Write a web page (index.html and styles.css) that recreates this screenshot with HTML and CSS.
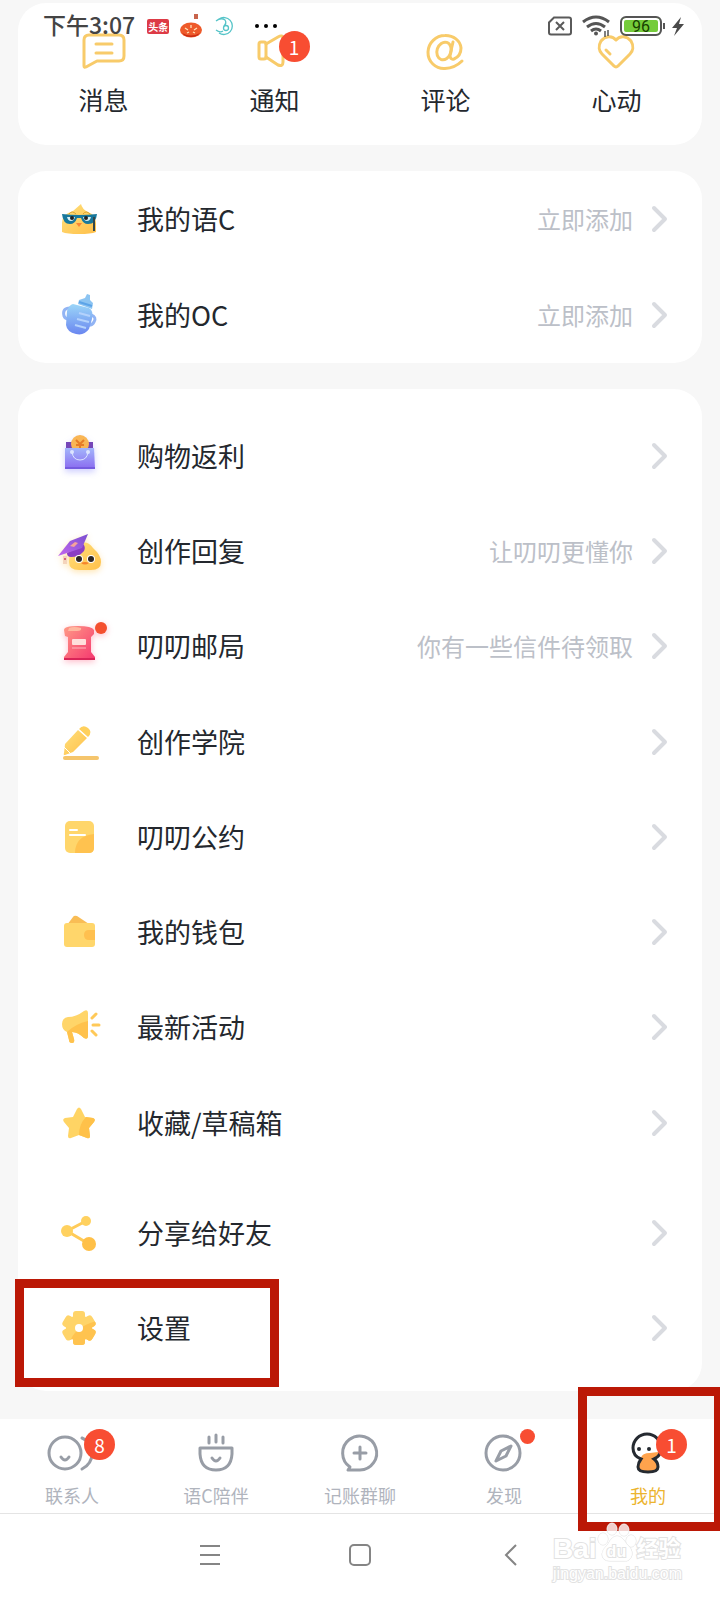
FILE: index.html
```
<!DOCTYPE html>
<html lang="zh-CN">
<head>
    <meta charset="UTF-8">
    <meta name="viewport" content="width=device-width, initial-scale=1.0">
    <title>我的</title>
    <link rel="stylesheet" href="styles.css">
</head>
<body>
    <!-- degradados compartidos -->
    <svg class="defs" width="0" height="0" aria-hidden="true">
        <defs>
            <linearGradient id="gold" x1="0" y1="0" x2="1" y2="1"><stop offset="0" stop-color="#ffe07c"/><stop offset="1" stop-color="#ffc04a"/></linearGradient>
            <linearGradient id="blue" x1="0" y1="0" x2="0" y2="1"><stop offset="0" stop-color="#9bd6f8"/><stop offset="1" stop-color="#6a86f0"/></linearGradient>
            <linearGradient id="violet" x1="0" y1="0" x2="0" y2="1"><stop offset="0" stop-color="#a3b6fb"/><stop offset="1" stop-color="#8a6af0"/></linearGradient>
            <linearGradient id="purple" x1="1" y1="0" x2="0" y2="1"><stop offset="0" stop-color="#7a4fd0"/><stop offset="1" stop-color="#c267ee"/></linearGradient>
            <linearGradient id="pink" x1="0" y1="0" x2="1" y2="1"><stop offset="0" stop-color="#ff9a86"/><stop offset="1" stop-color="#f5366f"/></linearGradient>
            <clipPath id="gear">
                <circle cx="24" cy="24" r="13"/>
                <rect x="18" y="7" width="12" height="34" rx="3"/>
                <rect x="18" y="7" width="12" height="34" rx="3" transform="rotate(60 24 24)"/>
                <rect x="18" y="7" width="12" height="34" rx="3" transform="rotate(120 24 24)"/>
            </clipPath>
        </defs>
    </svg>

    <header class="status-bar">
        <span class="clock">下午3:07</span>
        <span class="app-tag">头条</span>
        <svg class="pumpkin" width="24" height="26" viewBox="0 0 24 26">
            <path d="M15 1h4v5h-4z" fill="#c8644c"/>
            <ellipse cx="12" cy="17" rx="11" ry="7.500" fill="#ee5a2a"/>
            <path d="M3 20q9 5 18 0q-3 4-9 4t-9-4z" fill="#c92a12"/>
            <path d="M6 15l3 2M12 12v3M18 15l-3 2M8 20l2-1M16 20l-2-1" stroke="#ffe2b8" stroke-width="1.3"/>
        </svg>
        <svg class="swirl" width="20" height="20" viewBox="0 0 20 20" fill="none" stroke="#55c4c8" stroke-width="1.3">
            <path d="M5 3a8.500 8.500 0 1 1 0 14M2 5q5-4 9-1q2 3-1 6M2 14q4 3 7 1"/>
            <circle cx="12" cy="12" r="2.500"/>
        </svg>
        <svg class="dots" width="24" height="6" viewBox="0 0 24 6"><circle cx="3" cy="3" r="2"/><circle cx="12" cy="3" r="2"/><circle cx="21" cy="3" r="2"/></svg>
        <div class="status-right">
            <svg width="24" height="20" viewBox="0 0 24 20" fill="none" stroke="#5a5a5a" stroke-width="2"><path d="M6 1.500H21q2 0 2 2V16.500q0 2-2 2H3q-2 0-2-2V6.500zM8 6l8 8M16 6l-8 8"/></svg>
            <svg width="28" height="22" viewBox="0 0 28 22" fill="none" stroke="#555" stroke-width="3">
                <path d="M1 7q13-10 26 0M5 12q9-7 18 0M9 16q5-4 10 0"/><circle cx="14" cy="18.500" r="2" fill="#555" stroke="none"/>
                <path d="M23 16v6M26 15v6" stroke-width="1.500"/>
            </svg>
            <span class="battery">96</span>
            <svg width="12" height="20" viewBox="0 0 12 20"><path d="M9 1L0 12h5l-3 8L12 8H7z" fill="#4a4a4a"/></svg>
        </div>
    </header>

    <main>
        <nav class="card shortcuts">
            <a href="#mensajes">
                <span class="icon">
                    <svg viewBox="0 0 48 40" class="line-gold"><path d="M9 4H39q5 0 5 5V25q0 5-5 5H17L6 36q-2 1-2-1V9q0-5 5-5M16 13H32M16 22H32"/></svg>
                </span>
                消息
            </a>
            <a href="#avisos">
                <span class="icon">
                    <svg viewBox="0 0 48 40" class="line-gold"><rect x="8" y="11" width="7" height="17" rx="2"/><path d="M15 13L27 6q5-3 5 2V31q0 5-5 3L15 26"/></svg>
                    <span class="badge">1</span>
                </span>
                通知
            </a>
            <a href="#comentarios">
                <span class="icon">
                    <svg viewBox="0 0 48 40" class="line-gold"><ellipse cx="22" cy="20" rx="7" ry="9" transform="rotate(18 22 20)"/><path d="M31 11L28 24q0 5 4 4q7-3 7-11A15.500 13.500 0 0 0 23 4.500A17 17 0 0 0 6 21A16 16 0 0 0 23 37.500Q33 37 40 30"/></svg>
                </span>
                评论
            </a>
            <a href="#favoritos">
                <span class="icon">
                    <svg viewBox="0 0 48 40" class="line-gold"><path d="M23 9C19 4 12 5 8 10C5 15 6 20 9 23L21 35q2 2 4 0L37 23C40 20 41 15 38 10C34 5 27 4 23 9zM13 19L17 23"/></svg>
                </span>
                心动
            </a>
        </nav>

        <section class="card">
            <a class="row" href="#yuc">
                <svg class="row-icon" viewBox="0 0 48 48">
                    <path d="M7 37V28Q7 19 18 16L26 9Q27 14 33 17Q41 20 41 28V37Q36 39 24 39T7 37z" fill="url(#gold)"/>
                    <path d="M14 19q3-4 7 0M28 19q3-4 7 0" stroke="#d8a534" fill="none"/>
                    <path d="M7 19q17 2 35 0q-1 10-9 10q-5 0-7-6h-4q-2 6-7 6q-7 0-8-10z" fill="#17789c"/>
                    <path d="M39 22v14" stroke="#33474c" stroke-width="2"/>
                    <path d="M12 22h8q-1 4-4 4t-4-4M28 22h8q-1 4-4 4t-4-4" fill="#d8f0f4"/>
                    <circle cx="17" cy="23" r="2" fill="#222"/><circle cx="31" cy="23" r="2" fill="#222"/>
                    <path d="M21 28h6l-3 4z" fill="#f88736"/>
                </svg>
                <span class="label">我的语C</span>
                <span class="hint">立即添加</span>
                <svg class="chevron" viewBox="0 0 16 28"><path d="M3 3L14 14L3 25"/></svg>
            </a>
            <a class="row" href="#oc">
                <svg class="row-icon" viewBox="0 0 48 48">
                    <path d="M15 17Q7 17 9 25Q10 28 14 28M36 24Q42 26 39 31Q37 35 32 34" fill="none" stroke="#92b4f4" stroke-width="3"/>
                    <path d="M18 13L34 17Q39 20 37 28L34 38Q29 45 21 43Q12 41 11 34L12 20Q14 14 18 13z" fill="url(#blue)"/>
                    <path d="M23 13L24 9L30 7L32 3L35 4L35 9L38 12L37 18z" fill="#8cc4f2"/>
                    <path d="M24 11L37 15" stroke="#5ca4e8" stroke-width="2"/>
                    <path d="M24 22L35 25M22 28L34 31M20 34L31 37" stroke="#b4d2fc" stroke-width="2"/>
                </svg>
                <span class="label">我的OC</span>
                <span class="hint">立即添加</span>
                <svg class="chevron" viewBox="0 0 16 28"><path d="M3 3L14 14L3 25"/></svg>
            </a>
        </section>

        <section class="card card-main">
            <a class="row" href="#compras">
                <svg class="row-icon glow-violet" viewBox="0 0 48 48">
                    <path d="M11 10h27v8H11z" fill="#7546b8"/>
                    <circle cx="25" cy="12" r="9" fill="#f9b655"/>
                    <path d="M21 8l4 4l4-4M25 12v7M21 13h8" stroke="#e67c28" stroke-width="2" fill="none"/>
                    <path d="M10 16H39L40 37H10z" fill="url(#violet)"/>
                    <path d="M10 35H40V37H10z" fill="#755be0"/>
                    <path d="M17 20q1 8 8 8t8-8" stroke="#dce5ff" stroke-width="1" fill="none"/><circle cx="17" cy="20" r="2" fill="#dce5ff"/><circle cx="33" cy="20" r="2" fill="#dce5ff"/>
                </svg>
                <span class="label">购物返利</span>
                <svg class="chevron" viewBox="0 0 16 28"><path d="M3 3L14 14L3 25"/></svg>
            </a>
            <a class="row" href="#respuestas">
                <svg class="row-icon glow-gold" viewBox="0 0 48 48">
                    <path d="M14 35Q14 20 26 16Q33 14 38 21Q46 28 46 35Q46 43 36 43H24Q14 43 14 35z" fill="url(#gold)"/>
                    <path d="M12 26L28 17Q31 20 29 24Q24 30 16 30Q12 30 12 26z" fill="#8b3ec4"/>
                    <path d="M3 29L15 14L33 7L27 21z" fill="url(#purple)"/>
                    <path d="M15 19l5-4l3 1l-4 4z" fill="#f6a39a"/>
                    <path d="M10 29v8" stroke="#f4d4bc" stroke-width="4"/><circle cx="10" cy="32" r="1" fill="#c8426a"/>
                    <circle cx="24" cy="32" r="4" fill="#fff"/><circle cx="36" cy="32" r="4" fill="#fff"/>
                    <circle cx="24" cy="32" r="3" fill="#2d2624"/><circle cx="36" cy="32" r="3" fill="#2d2624"/>
                    <path d="M26 36q4-2 8 0q-4 3-8 0z" fill="#f5842c"/>
                </svg>
                <span class="label">创作回复</span>
                <span class="hint">让叨叨更懂你</span>
                <svg class="chevron" viewBox="0 0 16 28"><path d="M3 3L14 14L3 25"/></svg>
            </a>
            <a class="row" href="#correo">
                <svg class="row-icon glow-pink" viewBox="0 0 48 48">
                    <path d="M9 8Q9 4 23 4T39 8V12L36 15V30L40 35V38H9V35L13 30V15L10 14z" fill="url(#pink)"/>
                    <path d="M9 36H40V38H9z" fill="#d92458"/>
                    <path d="M14 6q5-2 12 0q1 3-4 3h-9z" fill="#ffb8a0"/>
                    <rect x="17" y="17" width="14" height="6" rx="1" fill="#ffe0dc"/><path d="M17 26h14" stroke="#ffb7bc"/>
                    <circle cx="46" cy="6" r="6" fill="#f4502f"/>
                </svg>
                <span class="label">叨叨邮局</span>
                <span class="hint">你有一些信件待领取</span>
                <svg class="chevron" viewBox="0 0 16 28"><path d="M3 3L14 14L3 25"/></svg>
            </a>
            <a class="row" href="#academia">
                <svg class="row-icon" viewBox="0 0 48 48">
                    <rect x="8" y="38" width="36" height="4" rx="2" fill="#f5c56c"/>
                    <path d="M10 26L23 12L32 20L18 34L10 37q-2 0-1-2Z" fill="url(#gold)"/>
                    <path d="M24 11Q28 6 33 10T33 19z" fill="#ffd05c"/>
                    <path d="M23 11L33 20M9 29L16 36" stroke="#fff" stroke-width="1"/>
                </svg>
                <span class="label">创作学院</span>
                <svg class="chevron" viewBox="0 0 16 28"><path d="M3 3L14 14L3 25"/></svg>
            </a>
            <a class="row" href="#convenio">
                <svg class="row-icon" viewBox="0 0 48 48">
                    <rect x="10" y="8" width="29" height="32" rx="5" fill="#ffd66b"/>
                    <path d="M39 21V35q0 5-5 5H20Q20 23 39 21z" fill="#ffc24f"/>
                    <path d="M15 17h7M15 22h15" stroke="#fff" stroke-width="2" stroke-linecap="round"/>
                </svg>
                <span class="label">叨叨公约</span>
                <svg class="chevron" viewBox="0 0 16 28"><path d="M3 3L14 14L3 25"/></svg>
            </a>
            <a class="row" href="#cartera">
                <svg class="row-icon" viewBox="0 0 48 48">
                    <path d="M12 17L18 9q1-2 4-1L34 16z" fill="#f9bd55"/>
                    <rect x="9" y="15" width="31" height="24" rx="3" fill="#ffd66b"/>
                    <path d="M40 22v10h-6q-5 0-5-5t5-5z" fill="#ffc04f"/>
                </svg>
                <span class="label">我的钱包</span>
                <svg class="chevron" viewBox="0 0 16 28"><path d="M3 3L14 14L3 25"/></svg>
            </a>
            <a class="row" href="#actividades">
                <svg class="row-icon" viewBox="0 0 48 48">
                    <path d="M13 14Q21 14 29 8q4-2 4 2V33q0 4-4 2Q23 29 17 29L19 36q1 4-2 4t-3-3L12 29Q7 27 7 21Q7 15 13 14z" fill="#ffd569"/>
                    <path d="M33 18V33q0 4-4 2Q23 29 17 29L19 36q1 4-2 4t-3-3L12 29Q20 21 33 18z" fill="#ffc24d"/>
                    <path d="M37 15L41 11M38 22H44M37 28L41 32" stroke="#ffc958" stroke-width="3" stroke-linecap="round"/>
                </svg>
                <span class="label">最新活动</span>
                <svg class="chevron" viewBox="0 0 16 28"><path d="M3 3L14 14L3 25"/></svg>
            </a>
            <a class="row" href="#guardados">
                <svg class="row-icon" viewBox="0 0 48 48">
                    <path d="M22 10q2-3 4 0l4 8l8 1q3 1 1 4l-5 6l1 8q0 3-3 2l-8-3l-8 3q-3 1-3-2l1-8l-5-6q-2-3 1-4l8-1z" fill="#ffd464"/>
                    <path d="M31 18l7 1q3 1 1 4l-5 6l1 8q0 3-3 2l-8-3q0-11 7-18z" fill="#ffc149"/>
                </svg>
                <span class="label">收藏/草稿箱</span>
                <svg class="chevron" viewBox="0 0 16 28"><path d="M3 3L14 14L3 25"/></svg>
            </a>
            <a class="row row-spaced" href="#compartir">
                <svg class="row-icon" viewBox="0 0 48 48">
                    <path d="M31 12L12 22L34 35" fill="none" stroke="#ffcb59" stroke-width="3"/>
                    <circle cx="31" cy="12" r="5" fill="#ffd15f"/><circle cx="12" cy="22" r="6" fill="#ffd15f"/><circle cx="34" cy="35" r="7" fill="#ffc048"/>
                </svg>
                <span class="label">分享给好友</span>
                <svg class="chevron" viewBox="0 0 16 28"><path d="M3 3L14 14L3 25"/></svg>
            </a>
            <a class="row row-marked" href="#ajustes">
                <svg class="row-icon" viewBox="0 0 48 48">
                    <g clip-path="url(#gear)">
                        <rect width="48" height="48" fill="#ffd469"/>
                        <path d="M48 16Q20 20 14 40V48H48z" fill="#ffc34f"/>
                    </g>
                    <circle cx="24" cy="24" r="4" fill="#fff"/>
                </svg>
                <span class="label">设置</span>
                <svg class="chevron" viewBox="0 0 16 28"><path d="M3 3L14 14L3 25"/></svg>
            </a>
        </section>
    </main>

    <nav class="tab-bar">
        <a href="#contactos">
            <span class="icon">
                <svg viewBox="0 0 48 48" class="line-gray"><circle cx="17" cy="24" r="16"/><path d="M13 28q4 6 8 0"/><path d="M34 9q10 4 10 15t-10 16"/></svg>
                <span class="badge">8</span>
            </span>
            联系人
        </a>
        <a href="#compania">
            <span class="icon">
                <svg viewBox="0 0 48 48" class="line-gray"><path d="M8 19H40V25Q39 41 24 41T8 25zM20 29q4 6 8 0M17 8v6M24 6v7M31 8v6"/></svg>
            </span>
            语C陪伴
        </a>
        <a href="#grupos">
            <span class="icon">
                <svg viewBox="0 0 48 48" class="line-gray"><path d="M12 41H24A17 17 0 1 0 14 38zM24 18V30M18 24H30"/></svg>
            </span>
            记账群聊
        </a>
        <a href="#descubrir">
            <span class="icon">
                <svg viewBox="0 0 48 48" class="line-gray"><circle cx="23" cy="24" r="17"/><path d="M31 17L21 22L16 32L26 27z"/></svg>
                <span class="dot"></span>
            </span>
            发现
        </a>
        <a class="active" href="#perfil">
            <span class="icon">
                <svg viewBox="0 0 48 48">
                    <path d="M16 30Q9 27 9 19A14 14 0 0 1 37 19Q37 27 30 30Q34 33 34 38Q34 43 24 43T14 38Q14 33 16 30z" fill="#fff"/>
                    <path d="M17 29Q18 24 26 24L34 23Q35 27 30 30Q34 33 34 38Q34 43 24 43T14 38Q14 33 17 29z" fill="#ffa34d"/>
                    <path d="M17 30Q9 27 9 19A14 14 0 0 1 37 19Q37 27 30 30Q34 33 34 38Q34 43 24 43T14 38Q14 34 17 30z" fill="none" stroke="#252a31" stroke-width="3"/>
                    <circle cx="15" cy="20" r="2" fill="#252a31"/><circle cx="25" cy="20" r="2" fill="#252a31"/>
                </svg>
                <span class="badge">1</span>
            </span>
            我的
        </a>
    </nav>

    <footer class="system-nav">
        <button type="button" aria-label="菜单"><svg viewBox="0 0 24 24"><path d="M2 3H22M2 12H22M2 21H22"/></svg></button>
        <button type="button" aria-label="主页"><svg viewBox="0 0 24 24"><rect x="2" y="2" width="20" height="20" rx="4"/></svg></button>
        <button type="button" aria-label="返回"><svg viewBox="0 0 24 24"><path d="M18 2L8 12L18 22"/></svg></button>
        <div class="watermark">
            <div class="watermark-logo">
                <span>Bai</span>
                <span class="paw">
                    <svg viewBox="0 0 40 42"><ellipse cx="6" cy="17" rx="5" ry="6"/><ellipse cx="15" cy="7" rx="5" ry="6"/><ellipse cx="27" cy="8" rx="5" ry="6"/><ellipse cx="34" cy="19" rx="5" ry="6"/><path d="M20 14q5 0 9 7q7 6 6 12q-2 7-8 6h-14q-8 0-8-7q0-4 6-10q4-8 9-8z"/></svg>
                    <span class="paw-text">du</span>
                </span>
                <span class="watermark-cn">经验</span>
            </div>
            <div class="watermark-url">jingyan.baidu.com</div>
        </div>
    </footer>
</body>
</html>
```
FILE: styles.css
```
/* ========= VARIABLES ========= */
:root{
    --bg:#f7f7f7;
    --text:#24282e;
    --muted:#bcc0c8;
    --gray:#989da6;
    --gold:#f8cb6a;
    --red:#f84d32;
    --mark:#bb1806;
}

/* ========= RESET ========= */
*,*::after{margin:0;padding:0;box-sizing:border-box;}
body{
    position:relative;
    display:flex;flex-direction:column;
    min-height:100vh;
    background:var(--bg);
    color:var(--text);
    font-family:"Noto Sans CJK SC",sans-serif;
}
a{color:inherit;text-decoration:none;}
svg{display:block;overflow:visible;}
.defs{position:absolute;}

/* ========= BARRA DE ESTADO ========= */
.status-bar{
    position:absolute;top:0;left:0;right:0;z-index:5;
    display:flex;align-items:center;
    height:52px;padding:0 36px 0 43px;
}
.clock{font-size:23px;line-height:48px;height:52px;font-weight:500;color:#444;white-space:nowrap;}
.app-tag{
    margin-left:12px;padding:0 1px;
    background:#dd3b46;color:#fff;border-radius:2px;
    font-size:10px;line-height:15px;font-weight:700;
}
.pumpkin{margin-left:10px;}
.swirl{margin-left:11px;}
.dots{margin-left:20px;}
.status-right{display:flex;align-items:center;gap:10px;margin-left:auto;}
.battery{
    position:relative;
    width:42px;height:20px;
    border:2px solid #555;border-radius:6px;
    background:#75cc3a;box-shadow:inset 0 0 0 2px #fff;
    color:#164000;text-align:center;
    font:400 16px/17px Roboto,sans-serif;
}
.battery::after{
    content:'';position:absolute;right:-5px;top:5px;
    width:2px;height:6px;background:#555;
}

/* ========= TARJETAS ========= */
main{flex:1;display:flex;flex-direction:column;gap:26px;padding:3px 18px 28px;}
.card{background:#fff;border-radius:28px;}
.card-main{flex:1;display:flex;flex-direction:column;padding:19px 0 15px;}

.shortcuts{display:flex;padding:28px 0;}
.shortcuts a{
    flex:1;display:flex;flex-direction:column;align-items:center;gap:10px;
    font-size:25px;line-height:36px;
}
.shortcuts .icon{position:relative;width:48px;height:40px;}
.line-gold,.line-gray{fill:none;stroke-linecap:round;stroke-linejoin:round;}
.line-gold{stroke:var(--gold);stroke-width:3;}
.line-gray{stroke:var(--gray);stroke-width:3;}

/* ========= AVISOS ========= */
.badge{
    position:absolute;left:36px;top:0;
    width:31px;height:31px;border-radius:50%;
    background:var(--red);color:#fff;
    font-size:19px;line-height:31px;text-align:center;
}
.shortcuts .badge{left:28px;}
.tab-bar .active .badge{left:32px;}
.dot{
    position:absolute;left:40px;top:0;
    width:15px;height:15px;border-radius:50%;background:var(--red);
}

/* ========= FILAS ========= */
.row{
    position:relative;
    display:flex;align-items:center;
    min-height:96px;padding:0 35px 0 37px;
}
.card-main .row{flex:1;min-height:90px;}
.card-main .row-spaced{margin-top:15px;}
.row-icon{width:48px;height:48px;margin-right:34px;}
.glow-violet{filter:drop-shadow(0 3px 3px rgba(120,120,255,.35));}
.glow-gold{filter:drop-shadow(0 2px 3px rgba(255,190,60,.4));}
.glow-pink{filter:drop-shadow(0 2px 3px rgba(255,70,110,.35));}
.label{font-size:27px;line-height:40px;}
.hint{margin-left:auto;font-size:24px;line-height:36px;color:var(--muted);}
.chevron{
    width:16px;height:28px;margin-left:auto;
    fill:none;stroke:#d9dbe0;stroke-width:4;stroke-linecap:round;stroke-linejoin:round;
}
.hint + .chevron{margin-left:18px;}

/* recuadros rojos de la guía */
.row-marked::after,
.tab-bar .active::after{
    content:'';position:absolute;
    border:9px solid var(--mark);
}
.row-marked::after{left:-3px;top:-2px;width:264px;height:108px;}
.tab-bar .active::after{left:2px;right:0;top:-32px;height:144px;border-right-width:6px;z-index:2;}

/* ========= PESTAÑAS ========= */
.tab-bar{display:flex;background:#fff;border-bottom:1px solid #e4e4e4;}
.tab-bar a{
    position:relative;flex:1;
    display:flex;flex-direction:column;align-items:center;gap:6px;
    padding:10px 0 6px;
    font-size:18px;line-height:24px;color:#b0b4bd;
}
.tab-bar .icon{position:relative;width:48px;height:48px;}
.tab-bar .active{color:#ecb42e;}

/* ========= NAVEGACIÓN DEL SISTEMA ========= */
.system-nav{
    position:relative;
    display:flex;justify-content:center;align-items:center;gap:126px;
    height:86px;padding-bottom:5px;background:#fff;
}
.system-nav button{width:24px;height:24px;background:none;border:0;}
.system-nav button svg{fill:none;stroke:#858585;stroke-width:2;}

/* ========= MARCA DE AGUA ========= */
.watermark{
    position:absolute;right:38px;top:8px;z-index:3;
    color:#fff;-webkit-text-stroke:2px #e2e2e2;paint-order:stroke fill;
    font-family:"Liberation Sans","Noto Sans CJK SC",sans-serif;
}
.watermark-logo{display:flex;align-items:flex-end;font-size:28px;line-height:30px;font-weight:700;}
.watermark-cn{font-size:22px;}
.paw{position:relative;width:40px;height:42px;}
.paw svg{fill:#fff;fill-opacity:.8;stroke:#e2e2e2;stroke-width:1;-webkit-text-stroke:0;}
.paw-text{position:absolute;left:10px;bottom:2px;font-size:16px;line-height:20px;}
.watermark-url{font-size:16px;line-height:20px;}
```
